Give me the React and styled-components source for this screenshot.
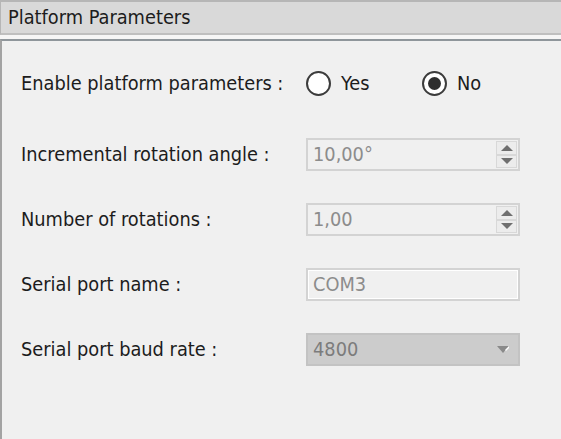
import React from 'react';
import styled, { createGlobalStyle } from 'styled-components';

const GlobalStyle = createGlobalStyle`
  html, body {
    margin: 0;
    padding: 0;
    background: #f0f0f0;
  }
  body {
    width: 561px;
    height: 439px;
    overflow: hidden;
    font-family: "DejaVu Sans Condensed", "DejaVu Sans", sans-serif;
    font-size: 19.8px;
    color: #1c1c1c;
  }
`

const Window = styled.div`
  display: flex;
  flex-direction: column;
  width: 561px;
  height: 439px;
`

const TitleBar = styled.div`
  display: flex;
  align-items: center;
  height: 31px;
  padding-left: 7px;
  background: #d9d9d9;
  border-top: 2px solid #b6b6b6;
  border-bottom: 2px solid #bfbfbf;
  border-left: 1px solid #b6b6b6;
`

const Gap = styled.div`
  height: 4px;
  background: #f6f6f6;
`

const Panel = styled.div`
  flex: 1;
  display: flex;
  flex-direction: column;
  padding: 25px 0 0 19px;
  background: #f0f0f0;
  border-top: 2px solid #8f969b;
  border-left: 2px solid #a3a3a3;
`

const Row = styled.div`
  display: grid;
  grid-template-columns: 285px 214px;
  align-items: center;
  height: ${p => p.$height || 33}px;
  margin-bottom: ${p => p.$after || 32}px;
`

const Label = styled.span`
  white-space: nowrap;
`

const Radios = styled.div`
  display: flex;
  align-items: center;
`

const RadioOption = styled.label`
  flex: none;
  display: flex;
  align-items: center;
  gap: 10px;
  width: 116px;
`

const RadioCircle = styled.span`
  box-sizing: border-box;
  display: flex;
  align-items: center;
  justify-content: center;
  width: 25px;
  height: 25px;
  border-radius: 50%;
  background: #ffffff;
  border: 2px solid #3c3c3c;

  &::after {
    content: '';
    display: ${p => (p.$checked ? 'block' : 'none')};
    width: 13px;
    height: 13px;
    border-radius: 50%;
    background: #2e2e2e;
  }
`

const Field = styled.div`
  box-sizing: border-box;
  display: flex;
  align-items: center;
  height: 33px;
  padding-left: 5px;
  border: 2px solid ${p => (p.$combo ? '#c3c3c3' : '#d3d3d3')};
  background: ${p => (p.$combo ? '#cccccc' : '#f0f0f0')};
  box-shadow: ${p => (p.$edit ? 'inset 0 0 0 1px #ffffff' : 'none')};
  color: ${p => (p.$combo ? '#7c7c7c' : '#8c8c8c')};
`

const Value = styled.span`
  flex: 1;
`

const Spinner = styled.div`
  display: flex;
  flex-direction: column;
  align-self: stretch;
  width: 21px;
  margin: 1px 1px 1px 0;
`

const SpinButton = styled.div`
  flex: 1;
  display: flex;
  align-items: center;
  justify-content: center;
  border: 1px solid #d8d8d8;
  background: #ececec;
`

const Arrow = ({ up }) => (
  <svg width="12" height="6" viewBox="0 0 12 6">
    <polygon points={up ? '0,6 6,0 12,6' : '0,0 12,0 6,6'} fill="#6f6f6f" />
  </svg>
)

const ComboArrow = styled.div`
  width: 30px;
  display: flex;
  justify-content: center;
`

function SpinBox({ value }) {
  return (
    <Field>
      <Value>{value}</Value>
      <Spinner>
        <SpinButton><Arrow up /></SpinButton>
        <SpinButton><Arrow /></SpinButton>
      </Spinner>
    </Field>
  );
}

export default function App() {
  return (
    <Window>
      <GlobalStyle />
      <TitleBar>Platform Parameters</TitleBar>
      <Gap />
      <Panel>
        <Row $height={34} $after={38}>
          <Label>Enable platform parameters :</Label>
          <Radios>
            <RadioOption>
              <RadioCircle />
              Yes
            </RadioOption>
            <RadioOption>
              <RadioCircle $checked />
              No
            </RadioOption>
          </Radios>
        </Row>
        <Row>
          <Label>Incremental rotation angle :</Label>
          <SpinBox value="10,00°" />
        </Row>
        <Row>
          <Label>Number of rotations :</Label>
          <SpinBox value="1,00" />
        </Row>
        <Row>
          <Label>Serial port name :</Label>
          <Field $edit>
            <Value>COM3</Value>
          </Field>
        </Row>
        <Row>
          <Label>Serial port baud rate :</Label>
          <Field $combo>
            <Value>4800</Value>
            <ComboArrow>
              <svg width="12" height="7" viewBox="0 0 12 7">
                <polygon points="0,0 12,0 6,7" fill="#8a8a8a" />
                <polygon points="8,4 12,0 12,2 9,5" fill="#ffffff" />
              </svg>
            </ComboArrow>
          </Field>
        </Row>
      </Panel>
    </Window>
  );
}
